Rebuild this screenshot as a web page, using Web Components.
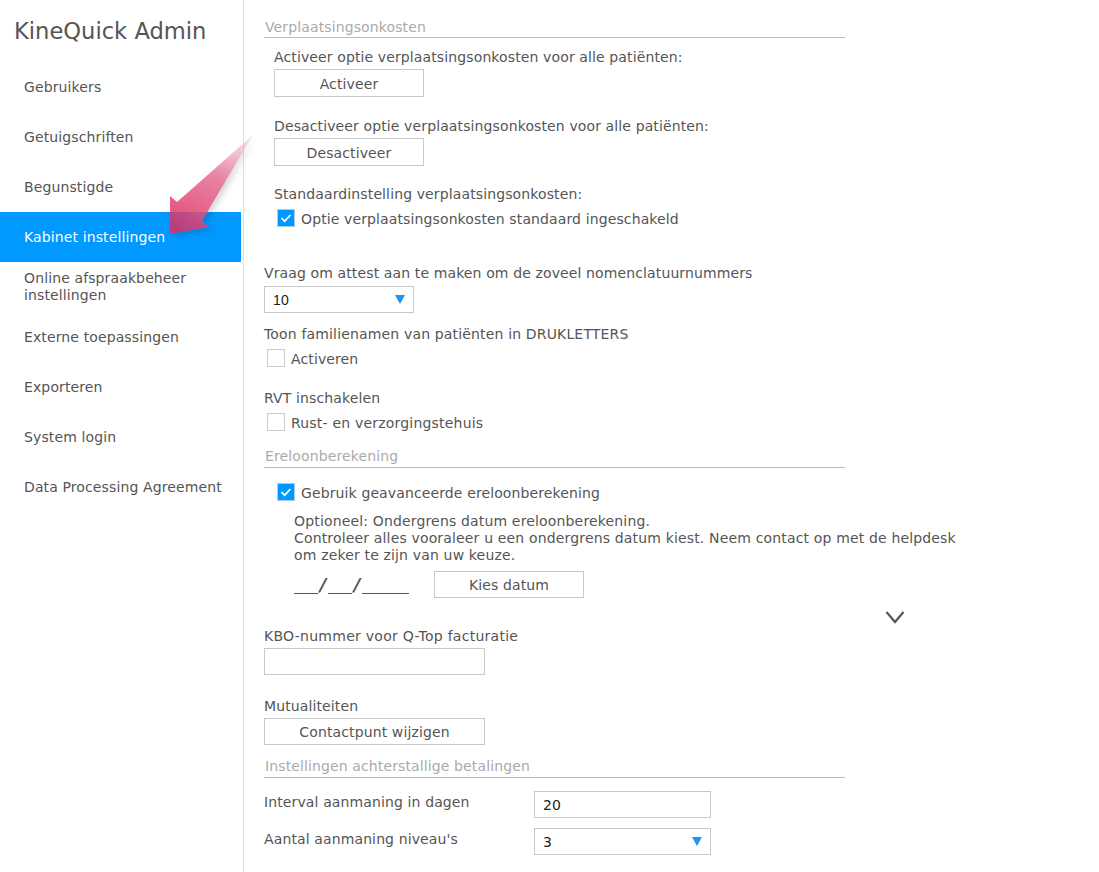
<!DOCTYPE html>
<html>
<head>
<meta charset="utf-8">
<title>KineQuick Admin</title>
<style>
  html, body { margin: 0; height: 100%; overflow: hidden; background: #fff; }
  body { font-family: "DejaVu Sans", Verdana, sans-serif; font-size: 14px; letter-spacing: .12px; color: #555; }
  .row { display: flex; align-items: center; }
</style>
</head>
<body>

<admin-page>
  <admin-sidebar slot="side" heading="KineQuick Admin">
    <nav-item>Gebruikers</nav-item>
    <nav-item>Getuigschriften</nav-item>
    <nav-item>Begunstigde</nav-item>
    <nav-item active>Kabinet instellingen</nav-item>
    <nav-item>Online afspraakbeheer instellingen</nav-item>
    <nav-item>Externe toepassingen</nav-item>
    <nav-item>Exporteren</nav-item>
    <nav-item>System login</nav-item>
    <nav-item>Data Processing Agreement</nav-item>
  </admin-sidebar>

  <section-title style="margin-top:19px;padding-bottom:1px">Verplaatsingsonkosten</section-title>
  <form-text style="margin:11px 0 0 10px">Activeer optie verplaatsingsonkosten voor alle patiënten:</form-text>
  <ui-button style="margin:3px 0 0 10px">Activeer</ui-button>
  <form-text style="margin:21px 0 0 10px">Desactiveer optie verplaatsingsonkosten voor alle patiënten:</form-text>
  <ui-button style="margin:3px 0 0 10px">Desactiveer</ui-button>
  <form-text style="margin:20px 0 0 10px">Standaardinstelling verplaatsingsonkosten:</form-text>
  <check-box checked style="margin:6px 0 0 13px">Optie verplaatsingsonkosten standaard ingeschakeld</check-box>

  <form-text style="margin:38px 0 0 0">Vraag om attest aan te maken om de zoveel nomenclatuurnummers</form-text>
  <select-box value="10" narrow style="margin-top:4px;width:150px"></select-box>
  <form-text style="margin:13px 0 0 0;letter-spacing:.16px">Toon familienamen van patiënten in DRUKLETTERS</form-text>
  <check-box style="margin:6px 0 0 3px">Activeren</check-box>
  <form-text style="margin:23px 0 0 0">RVT inschakelen</form-text>
  <check-box style="margin:6px 0 0 3px;letter-spacing:.2px">Rust- en verzorgingstehuis</check-box>

  <section-title style="margin-top:17px">Ereloonberekening</section-title>
  <check-box checked style="margin:15px 0 0 13px">Gebruik geavanceerde ereloonberekening</check-box>
  <form-text style="margin:12px 0 0 30px;width:680px;letter-spacing:.16px">Optioneel: Ondergrens datum ereloonberekening.<br>Controleer alles vooraleer u een ondergrens datum kiest. Neem contact op met de helpdesk om zeker te zijn van uw keuze.</form-text>
  <div class="row" style="margin:7px 0 0 30px">
    <date-mask></date-mask>
    <ui-button style="margin-left:25px;--h:27px">Kies datum</ui-button>
  </div>

  <form-text style="margin:30px 0 0 0;letter-spacing:.27px">KBO-nummer voor Q-Top facturatie</form-text>
  <text-box style="margin-top:3px;width:221px"></text-box>
  <form-text style="margin:23px 0 0 0">Mutualiteiten</form-text>
  <ui-button style="margin-top:3px;--w:221px;--h:27px">Contactpunt wijzigen</ui-button>

  <section-title style="margin-top:13px">Instellingen achterstallige betalingen</section-title>
  <div class="row" style="margin-top:13px">
    <form-text style="width:270px;margin-top:-5px">Interval aanmaning in dagen</form-text>
    <text-box value="20" style="width:177px"></text-box>
  </div>
  <div class="row" style="margin-top:10px">
    <form-text style="width:270px;margin-top:-5px">Aantal aanmaning niveau's</form-text>
    <select-box value="3" style="width:177px"></select-box>
  </div>

  <scroll-chevron slot="over"></scroll-chevron>
  <pink-arrow slot="over"></pink-arrow>
</admin-page>

<script>
class AdminPage extends HTMLElement {
  connectedCallback() {
    this.attachShadow({ mode: "open" });
    this.shadowRoot.innerHTML = `
      <style>
        :host { display: grid; grid-template-columns: 244px 1fr; height: 100vh; position: relative; overflow: hidden; }
        .main { padding-left: 20px; min-width: 0; }
      </style>
      <slot name="side"></slot>
      <div class="main"><slot></slot></div>
      <slot name="over"></slot>
    `;
  }
}

class AdminSidebar extends HTMLElement {
  connectedCallback() {
    this.attachShadow({ mode: "open" });
    const heading = this.getAttribute("heading") || "";
    this.shadowRoot.innerHTML = `
      <style>
        :host { display: block; box-sizing: border-box; border-right: 1px solid #ddd; height: 100%; padding-right: 2px; }
        h1 { margin: 0; height: 62px; box-sizing: border-box; padding: 15px 0 0 14px; font-size: 22.6px; font-weight: 400; line-height: 32px; letter-spacing: 0; color: #555; }
      </style>
      <h1>${heading}</h1>
      <slot></slot>
    `;
  }
}

class NavItem extends HTMLElement {
  connectedCallback() {
    this.attachShadow({ mode: "open" });
    this.shadowRoot.innerHTML = `
      <style>
        :host { display: flex; align-items: center; height: 50px; padding: 0 10px 0 24px; color: #555; line-height: 17px; }
        :host([active]) { background: #0099ff; color: #fff; }
      </style>
      <slot></slot>
    `;
  }
}

class SectionTitle extends HTMLElement {
  connectedCallback() {
    this.attachShadow({ mode: "open" });
    this.shadowRoot.innerHTML = `
      <style>
        :host { display: block; width: 581px; box-sizing: border-box; padding: 0 0 2px 1px; border-bottom: 1px solid #bbb; color: #aaa; line-height: 17px; }
      </style>
      <slot></slot>
    `;
  }
}

class FormText extends HTMLElement {
  connectedCallback() {
    this.attachShadow({ mode: "open" });
    this.shadowRoot.innerHTML = `
      <style>
        :host { display: block; line-height: 17px; color: #555; }
      </style>
      <slot></slot>
    `;
  }
}

class UiButton extends HTMLElement {
  connectedCallback() {
    this.attachShadow({ mode: "open" });
    this.shadowRoot.innerHTML = `
      <style>
        :host { display: flex; align-items: center; justify-content: center; box-sizing: border-box; width: var(--w, 150px); height: var(--h, 28px); padding-top: 1px; border: 1px solid #c8c8c8; background: #fff; color: #555; }
      </style>
      <slot></slot>
    `;
  }
}

class CheckBox extends HTMLElement {
  connectedCallback() {
    this.attachShadow({ mode: "open" });
    const tick = this.hasAttribute("checked")
      ? `<svg width="16" height="16" viewBox="0 0 16 16"><path d="M3.5 8.2 L6.6 11.2 L12.5 5" fill="none" stroke="#fff" stroke-width="1.7"/></svg>`
      : "";
    this.shadowRoot.innerHTML = `
      <style>
        :host { display: flex; align-items: center; height: 18px; color: #555; }
        .box { box-sizing: border-box; width: 18px; height: 18px; margin-right: 6px; border: 1px solid #ccc; background: #fff; display: flex; }
        :host([checked]) .box { background: #0099ff; border-color: #a9cfe8; }
        .text { padding-top: 2px; }
      </style>
      <span class="box">${tick}</span>
      <span class="text"><slot></slot></span>
    `;
  }
}

class SelectBox extends HTMLElement {
  connectedCallback() {
    this.attachShadow({ mode: "open" });
    const value = this.getAttribute("value") || "";
    this.shadowRoot.innerHTML = `
      <style>
        :host { display: flex; align-items: center; justify-content: space-between; box-sizing: border-box; height: 27px; padding: 0 8px; border: 1px solid #c8c8c8; background: #fff; color: #222; }
        :host([narrow]) span { font-family: "Liberation Sans", Arial, sans-serif; font-size: 14px; }
        svg { display: block; }
      </style>
      <span>${value}</span>
      <svg width="10" height="9" viewBox="0 0 10 9"><path d="M0 0 H10 L5 9 Z" fill="#1e96f0"/></svg>
    `;
  }
}

class TextBox extends HTMLElement {
  connectedCallback() {
    this.attachShadow({ mode: "open" });
    const value = this.getAttribute("value") || "";
    this.shadowRoot.innerHTML = `
      <style>
        :host { display: flex; align-items: center; box-sizing: border-box; height: 27px; padding: 0 8px; border: 1px solid #c8c8c8; background: #fff; color: #222; }
      </style>
      <span>${value}</span>
    `;
  }
}

class DateMask extends HTMLElement {
  connectedCallback() {
    this.attachShadow({ mode: "open" });
    this.shadowRoot.innerHTML = `
      <style>
        :host { display: flex; align-items: flex-end; height: 24px; width: 115px; color: #555; }
        i { display: block; height: 0; border-bottom: 1px solid #555; margin-bottom: 3px; }
        b { font-size: 18px; line-height: 24px; width: 10px; text-align: center; font-style: italic; }
      </style>
      <i style="width:24px"></i><b>/</b><i style="width:24px"></i><b>/</b><i style="width:47px"></i>
    `;
  }
}

class ScrollChevron extends HTMLElement {
  connectedCallback() {
    this.attachShadow({ mode: "open" });
    this.shadowRoot.innerHTML = `
      <style>
        :host { position: absolute; left: 885px; top: 610px; width: 20px; height: 14px; }
        svg { display: block; }
      </style>
      <svg width="20" height="14" viewBox="0 0 20 14"><path d="M1.5 2 L10 12 L18.5 2" fill="none" stroke="#555" stroke-width="2.2"/></svg>
    `;
  }
}

class PinkArrow extends HTMLElement {
  connectedCallback() {
    this.attachShadow({ mode: "open" });
    this.shadowRoot.innerHTML = `
      <style>
        :host { position: absolute; left: 160px; top: 125px; width: 110px; height: 125px; pointer-events: none; }
        svg { display: block; overflow: visible; }
      </style>
      <svg width="110" height="125" viewBox="160 125 110 125">
        <defs>
          <linearGradient id="g" gradientUnits="userSpaceOnUse" x1="253" y1="135" x2="178" y2="232">
            <stop offset="0" stop-color="#eda0b8" stop-opacity=".25"/>
            <stop offset=".45" stop-color="#e5799b" stop-opacity=".9"/>
            <stop offset="1" stop-color="#e22a5f" stop-opacity=".8"/>
          </linearGradient>
          <filter id="s" x="-30%" y="-30%" width="160%" height="160%">
            <feDropShadow dx="3" dy="3" stdDeviation="3" flood-color="#000" flood-opacity=".18"/>
          </filter>
        </defs>
        <path d="M253 135 L177 202 L170 196 L170 234 L209 227 L202 221 Z" fill="url(#g)" filter="url(#s)"/>
      </svg>
    `;
  }
}

customElements.define("admin-page", AdminPage);
customElements.define("admin-sidebar", AdminSidebar);
customElements.define("nav-item", NavItem);
customElements.define("section-title", SectionTitle);
customElements.define("form-text", FormText);
customElements.define("ui-button", UiButton);
customElements.define("check-box", CheckBox);
customElements.define("select-box", SelectBox);
customElements.define("text-box", TextBox);
customElements.define("date-mask", DateMask);
customElements.define("scroll-chevron", ScrollChevron);
customElements.define("pink-arrow", PinkArrow);
</script>
</body>
</html>
